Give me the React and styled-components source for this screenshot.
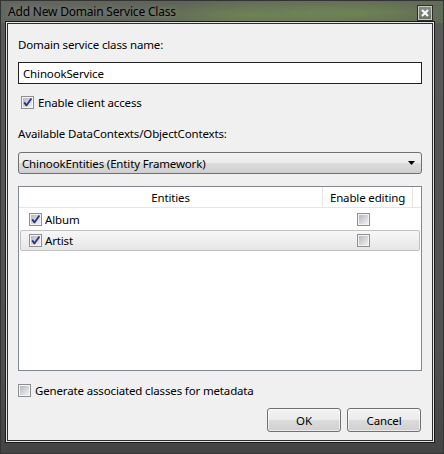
import React, { useId } from 'react';
import styled, { createGlobalStyle } from 'styled-components';

const GlobalStyle = createGlobalStyle`
  html, body {
    margin: 0;
    padding: 0;
    background: #4a4a4a;
  }
  body {
    font-family: "Noto Sans", "Open Sans", sans-serif;
    font-size: 11.5px;
    letter-spacing: -0.15px;
    color: #000;
  }
`;

const Window = styled.div`
  width: 444px;
  height: 454px;
  box-sizing: border-box;
  padding: 0 8px 10px 4px;
  display: flex;
  flex-direction: column;
  background:
    radial-gradient(ellipse 120px 14px at 250px 14px, rgba(120, 150, 80, 0.55), transparent),
    radial-gradient(ellipse 90px 12px at 360px 12px, rgba(120, 150, 80, 0.5), transparent),
    linear-gradient(to right, #626660 0%, #5f6459 40%, #67715a 70%, #606a55 100%) top / 100% 22px no-repeat,
    linear-gradient(to bottom, #5a5a5a, #505050 80%, #444 100%);
  border: 1px solid #333;
`;

const TitleBar = styled.div`
  height: 20px;
  display: flex;
  align-items: center;
  justify-content: space-between;
`;

const Title = styled.span`
  padding-left: 3px;
  font-size: 12px;
  letter-spacing: -0.2px;
  color: #000;
  text-shadow: 0 0 6px rgba(255, 255, 255, 0.35);
`;

const CloseButton = styled.div`
  width: 14px;
  height: 14px;
  margin-right: 2px;
  margin-top: 3px;
  border: 1px solid #2c2c2c;
  box-shadow: inset 0 0 0 1px #c8c8c8;
  background: linear-gradient(to bottom, #8a8f86, #6c7268);
  display: flex;
  align-items: center;
  justify-content: center;
`;

const Ring = styled.div`
  flex: 1;
  border: 1px solid #1c1c1c;
  padding: 1px;
  background: #e4e4e4;
  display: flex;
`;

const Content = styled.div`
  flex: 1;
  border: 1px solid #2e2e2e;
  background: #f0f0f0;
  padding: 0 10px 0 10px;
  display: flex;
  flex-direction: column;
`;

const Label = styled.div`
  line-height: 16px;
  margin-top: ${(p) => p.$mt}px;
`;

const TextBox = styled.div`
  margin-top: 9px;
  height: 22px;
  box-sizing: border-box;
  border: 1px solid #222;
  background: #fff;
  padding-left: 4px;
  display: flex;
  align-items: center;
`;

const CheckRow = styled.label`
  display: flex;
  align-items: center;
  gap: ${(p) => p.$gap || 4}px;
  height: 16px;
  margin-top: ${(p) => p.$mt || 0}px;
  padding-left: ${(p) => p.$pl || 0}px;
`;

const Combo = styled.div`
  margin-top: 10px;
  height: 22px;
  box-sizing: border-box;
  border: 1px solid #707070;
  border-radius: 3px;
  background: linear-gradient(to bottom, #f2f2f2 0%, #ebebeb 50%, #dddddd 50%, #cfcfcf 100%);
  padding: 0 6px 0 3px;
  display: flex;
  align-items: center;
  justify-content: space-between;
`;

const Grid = styled.div`
  margin-top: 12px;
  height: 185px;
  box-sizing: border-box;
  border: 1px solid #828790;
  background: #fff;
  display: flex;
  flex-direction: column;
`;

const Header = styled.div`
  display: flex;
  height: 20px;
  border-bottom: 1px solid #e5e5e5;
`;

const HeaderCell = styled.div`
  width: ${(p) => p.$w}px;
  box-sizing: border-box;
  border-right: 1px solid #e5e5e5;
  display: flex;
  align-items: center;
  justify-content: center;
`;

const Row = styled.div`
  display: flex;
  align-items: center;
  height: ${(p) => (p.$selected ? 21 : 22)}px;
  box-sizing: border-box;
  margin: 0 1px;
  border: 1px solid ${(p) => (p.$selected ? '#c2c2c2' : 'transparent')};
  border-radius: 2px;
  background: ${(p) =>
    p.$selected ? 'linear-gradient(to bottom, #f7f7f7, #e6e6e6)' : 'transparent'};
`;

const EntityCell = styled.div`
  width: 301px;
  padding-left: 8px;
  box-sizing: border-box;
  display: flex;
  align-items: center;
  gap: 3px;
`;

const EditCell = styled.div`
  padding-left: 35px;
  display: flex;
  align-items: center;
`;

const Buttons = styled.div`
  margin-top: 10px;
  display: flex;
  justify-content: flex-end;
  gap: 6px;
  padding-right: 1px;
`;

const Button = styled.div`
  width: 74px;
  height: 24px;
  box-sizing: border-box;
  border: 1px solid #707070;
  border-radius: 3px;
  background: linear-gradient(to bottom, #f2f2f2 0%, #ebebeb 50%, #dddddd 50%, #cfcfcf 100%);
  box-shadow: inset 0 0 0 1px rgba(255, 255, 255, 0.6);
  display: flex;
  align-items: center;
  justify-content: center;
`;

const Check = ({ checked }) => {
  const id = useId();
  return (
    <svg width="13" height="13" viewBox="0 0 13 13" style={{ flex: 'none' }}>
      <defs>
        <linearGradient id={id} x1="0" y1="0" x2="1" y2="1">
          <stop offset="0" stopColor="#b4b8bf" />
          <stop offset="1" stopColor="#f1f1f2" />
        </linearGradient>
      </defs>
      <rect x="0.5" y="0.5" width="12" height="12" fill="#f4f4f4" stroke="#8f8f8f" />
      <rect x="2" y="2" width="9" height="9" fill={`url(#${id})`} />
      {checked && (
        <path
          d="M3.2 6.4 L5.4 9.4 L10.4 2.4"
          fill="none"
          stroke="#2c2f86"
          strokeWidth="1.8"
          strokeLinejoin="round"
        />
      )}
    </svg>
  );
};

const entities = [
  { name: 'Album', selected: false },
  { name: 'Artist', selected: true },
];

export default function App() {
  return (
    <>
      <GlobalStyle />
      <Window>
        <TitleBar>
          <Title>Add New Domain Service Class</Title>
          <CloseButton>
            <svg width="8" height="8" viewBox="0 0 8 8">
              <path d="M1 1 L7 7 M7 1 L1 7" stroke="#fff" strokeWidth="2" />
            </svg>
          </CloseButton>
        </TitleBar>
        <Ring>
          <Content>
            <Label $mt={13}>Domain service class name:</Label>
            <TextBox>ChinookService</TextBox>
            <CheckRow $mt={10} $pl={3}>
              <Check checked />
              Enable client access
            </CheckRow>
            <Label $mt={16}>Available DataContexts/ObjectContexts:</Label>
            <Combo>
              <span>ChinookEntities (Entity Framework)</span>
              <svg width="7" height="4" viewBox="0 0 7 4">
                <path d="M0 0 H7 L3.5 4 Z" fill="#000" />
              </svg>
            </Combo>
            <Grid>
              <Header>
                <HeaderCell $w={304}>Entities</HeaderCell>
                <HeaderCell $w={90}>Enable editing</HeaderCell>
              </Header>
              {entities.map((e) => (
                <Row key={e.name} $selected={e.selected}>
                  <EntityCell>
                    <Check checked />
                    {e.name}
                  </EntityCell>
                  <EditCell>
                    <Check />
                  </EditCell>
                </Row>
              ))}
            </Grid>
            <CheckRow $mt={11}>
              <Check />
              Generate associated classes for metadata
            </CheckRow>
            <Buttons>
              <Button>OK</Button>
              <Button>Cancel</Button>
            </Buttons>
          </Content>
        </Ring>
      </Window>
    </>
  );
}
